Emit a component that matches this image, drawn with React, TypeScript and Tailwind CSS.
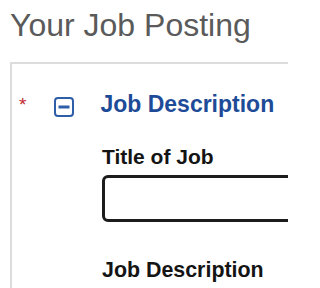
export default function App() {
  return (
    <div className="w-[288px] h-[288px] overflow-hidden bg-white font-['Liberation_Sans',Arial,sans-serif]">
      <h1 className="pl-[10px] pt-[7px] text-[32px] leading-[37px] text-[#5a5a5a] whitespace-nowrap">
        Your Job Posting
      </h1>
      <div className="mt-[18px] ml-[10px] w-[278px] h-[226px] overflow-hidden border-t-2 border-l-2 border-[#dcdcdc]">
        {/* section header */}
        <div className="flex items-start pt-[26px]">
          <span className="ml-[7px] mt-[5px] text-[19px] leading-[19px] text-[#c0282d]">*</span>
          <svg className="ml-[28px] mt-[7px] shrink-0" width="20" height="20" viewBox="0 0 20 20">
            <rect x="1" y="1" width="18" height="18" rx="3" fill="white" stroke="#2f5ea8" strokeWidth="2" />
            <rect x="4.5" y="8.5" width="11" height="3" fill="#2f5ea8" />
          </svg>
          <h2 className="ml-[26px] text-[23px] leading-[28px] font-bold text-[#1e4b98] whitespace-nowrap">
            Job Description
          </h2>
        </div>
        <div className="pl-[90px]">
          <label className="block mt-[27px] text-[21px] leading-[24px] font-bold text-[#141414] whitespace-nowrap">
            Title of Job
          </label>
          <input
            type="text"
            className="block mt-[6px] w-[200px] h-[47px] border-[3px] border-[#1c1c1c] rounded-[6px] bg-white outline-none"
          />
          <label className="block mt-[36px] text-[21.4px] leading-[24px] font-bold text-[#141414] whitespace-nowrap">
            Job Description
          </label>
        </div>
      </div>
    </div>
  );
}
